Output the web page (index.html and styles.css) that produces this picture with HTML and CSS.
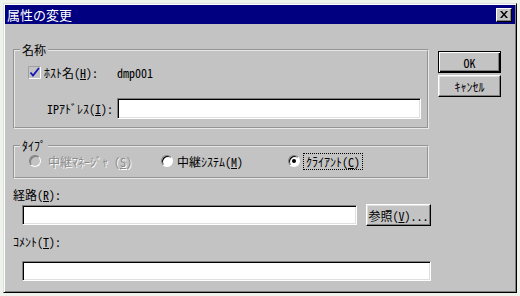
FILE: index.html
```html
<!DOCTYPE html>
<html lang="ja">
<head>
  <meta charset="UTF-8">
  <link rel="stylesheet" href="styles.css">
  <title>属性の変更</title>
</head>
<body>

  <div class="window">
    <div class="titlebar">
      <span class="title">属性の変更</span>
      <span class="close">
        <svg width="8" height="7" viewBox="0 0 8 7"><path d="M0 0h2l2 2.5L6 0h2L5 3.5 8 7H6L4 4.5 2 7H0l3-3.5z" fill="#000"/></svg>
      </span>
    </div>

    <div class="dialog">
      <div class="main">

        <!-- 名称 -->
        <fieldset class="group group-name">
          <legend>名称</legend>
          <div class="row row-host">
            <span class="check">
              <svg width="13" height="13" viewBox="0 0 13 13">
                <path d="M0.5 12.5V0.5H12" stroke="#a0a0a0" fill="none"/>
                <path d="M1 12.5H12.5V1" stroke="#fff" fill="none"/>
                <path d="M2.5 6.5l2.5 3L11 2" stroke="#1818b8" stroke-width="1.8" fill="none"/>
              </svg>
            </span>
            <span class="host-label">ﾎｽﾄ名(<u>H</u>):</span>
            <span class="host-value">dmp001</span>
          </div>
          <div class="row row-ip">
            <label class="ip-label">IPｱﾄﾞﾚｽ(<u>I</u>):</label>
            <div class="field field-ip"></div>
          </div>
        </fieldset>

        <!-- タイプ -->
        <fieldset class="group group-type">
          <legend>ﾀｲﾌﾟ</legend>
          <div class="row radios">
            <span class="radio-item item-1 disabled">
              <span class="radio"></span>
              <span class="radio-text">中継ﾏﾈｰｼﾞｬ (<u>S</u>)</span>
            </span>
            <span class="radio-item item-2">
              <span class="radio"></span>
              <span class="radio-text">中継ｼｽﾃﾑ(<u>M</u>)</span>
            </span>
            <span class="radio-item item-3">
              <span class="radio checked"></span>
              <span class="radio-text focus">ｸﾗｲｱﾝﾄ(<u>C</u>)</span>
            </span>
          </div>
        </fieldset>

        <div class="caption">経路(<u>R</u>):</div>
        <div class="row row-path">
          <div class="field field-path"></div>
          <button class="btn btn-browse">参照(<u>V</u>)...</button>
        </div>

        <div class="caption caption-comment">ｺﾒﾝﾄ(<u>T</u>):</div>
        <div class="field field-comment"></div>
      </div>

      <div class="side">
        <button class="btn btn-default">OK</button>
        <button class="btn">ｷｬﾝｾﾙ</button>
      </div>
    </div>
  </div>

</body>
</html>
```

FILE: styles.css
```css
body {
  margin: 0;
  background-color: #eef3ec;
  font-family: "Noto Sans CJK JP", sans-serif;
  font-size: 12px;
  font-feature-settings: "hwid";
  color: #000;
}

.window {
  box-sizing: border-box;
  width: 514px;
  height: 290px;
  margin: 3px 0 0 3px;
  background-color: #c3c3c3;
  border: 1px solid;
  border-color: #dfdfdf #000 #000 #dfdfdf;
  box-shadow: inset 1px 1px 0 #fff, inset -1px -1px 0 #808080;
  padding: 1px;
}

.titlebar {
  height: 19px;
  background-color: #000080;
  display: flex;
  align-items: center;
  justify-content: space-between;
  padding: 0 3px 0 2px;
}

.title {
  color: #fff;
  font-size: 13px;
  line-height: 19px;
}

.close {
  box-sizing: border-box;
  width: 16px;
  height: 14px;
  background-color: #c3c3c3;
  border: 1px solid;
  border-color: #fff #000 #000 #fff;
  box-shadow: inset -1px -1px 0 #808080;
  display: flex;
  align-items: center;
  justify-content: center;
}

.dialog {
  display: flex;
  padding: 18px 0 0 8px;
}

.main {
  width: 418px;
}

.row {
  display: flex;
  align-items: center;
}

u {
  text-decoration: underline;
  text-underline-offset: 1px;
}

/* グループボックス */
.group {
  box-sizing: border-box;
  width: 416px;
  margin: 0;
  padding: 0;
  border: 2px groove #e8e8e8;
}

.group legend {
  margin-left: 5px;
  padding: 0 2px;
  line-height: 16px;
  font-size: 12px;
}

.row-host {
  height: 16px;
  margin-top: 6px;
  padding-left: 13px;
}

.check {
  width: 13px;
  height: 13px;
  margin-right: 3px;
}

.check svg {
  display: block;
}

.host-label {
  width: 73px;
}

.row-ip {
  margin-top: 18px;
  margin-bottom: 8px;
  padding-left: 32px;
}

.ip-label {
  width: 70px;
}

/* テキストボックス */
.field {
  box-sizing: border-box;
  height: 20px;
  background-color: #fff;
  border: 1px solid;
  border-color: #808080 #fff #fff #808080;
  box-shadow: inset 1px 1px 0 #000, inset -1px -1px 0 #dfdfdf;
}

.field-ip {
  width: 304px;
  height: 21px;
}

.group-type {
  margin-top: 9px;
}

.radios {
  height: 16px;
  margin-top: -1px;
  margin-bottom: 8px;
  padding-left: 14px;
}

.radio-item {
  display: flex;
  align-items: center;
}

.item-1 {
  width: 132px;
}

.item-2 {
  width: 127px;
}

.radio {
  box-sizing: border-box;
  width: 12px;
  height: 12px;
  border-radius: 50%;
  border: 1px solid;
  border-color: #808080 #fff #fff #808080;
  background-color: #fff;
  box-shadow: inset 1px 1px 0 #000;
  margin-right: 4px;
  position: relative;
}

.radio.checked::after {
  content: "";
  position: absolute;
  left: 3px;
  top: 3px;
  width: 4px;
  height: 4px;
  border-radius: 50%;
  background-color: #000;
}

.disabled .radio {
  background-color: #c3c3c3;
  box-shadow: inset 1px 1px 0 #808080;
}

.disabled .radio-text {
  color: #8a8a8a;
  text-shadow: 1px 1px 0 #fff;
  margin-left: 3px;
}

.focus {
  outline: 1px dotted #000;
  outline-offset: 0;
  padding: 0 2px;
  line-height: 15px;
}

.caption {
  line-height: 16px;
  margin-top: 8px;
}

.row-path {
  margin-top: 1px;
  padding-left: 9px;
}

.field-path {
  width: 335px;
}

.caption-comment {
  margin-top: 8px;
}

.field-comment {
  width: 409px;
  margin-top: 11px;
  margin-left: 9px;
}

/* ボタン */
.btn {
  box-sizing: border-box;
  height: 22px;
  padding: 0;
  font-family: "Noto Sans CJK JP", sans-serif;
  font-size: 12px;
  font-feature-settings: "hwid";
  color: #000;
  background-color: #c3c3c3;
  border: 1px solid;
  border-color: #fff #000 #000 #fff;
  box-shadow: inset -1px -1px 0 #808080, inset 1px 1px 0 #dfdfdf;
}

.btn-browse {
  width: 65px;
  margin-left: 9px;
}

.side {
  display: flex;
  flex-direction: column;
  gap: 2px;
  margin: 9px 0 0 7px;
  width: 63px;
}

.btn-default {
  border: 1px solid #000;
  box-shadow: inset 1px 1px 0 #fff, inset -1px -1px 0 #000, inset -2px -2px 0 #808080;
}
```
